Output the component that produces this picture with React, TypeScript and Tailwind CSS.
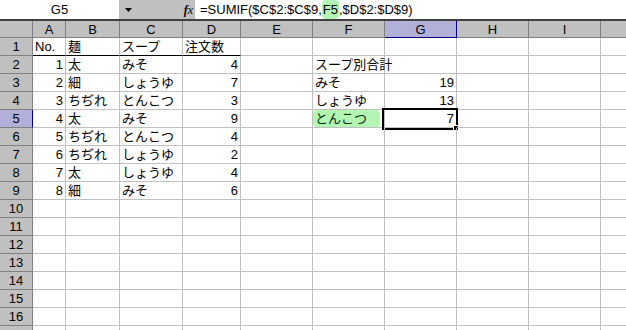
import type React from "react";

const FONT = { fontFamily: '"Liberation Sans", "Noto Sans CJK JP", sans-serif' };

type Cell = { v: string; right?: boolean };

// row -> column letter -> value
const data: Record<number, Record<string, Cell>> = {
  1: { A: { v: "No." }, B: { v: "麺" }, C: { v: "スープ" }, D: { v: "注文数" } },
  2: { A: { v: "1", right: true }, B: { v: "太" }, C: { v: "みそ" }, D: { v: "4", right: true }, F: { v: "スープ別合計" } },
  3: { A: { v: "2", right: true }, B: { v: "細" }, C: { v: "しょうゆ" }, D: { v: "7", right: true }, F: { v: "みそ" }, G: { v: "19", right: true } },
  4: { A: { v: "3", right: true }, B: { v: "ちぢれ" }, C: { v: "とんこつ" }, D: { v: "3", right: true }, F: { v: "しょうゆ" }, G: { v: "13", right: true } },
  5: { A: { v: "4", right: true }, B: { v: "太" }, C: { v: "みそ" }, D: { v: "9", right: true }, F: { v: "とんこつ" }, G: { v: "7", right: true } },
  6: { A: { v: "5", right: true }, B: { v: "ちぢれ" }, C: { v: "とんこつ" }, D: { v: "4", right: true } },
  7: { A: { v: "6", right: true }, B: { v: "ちぢれ" }, C: { v: "しょうゆ" }, D: { v: "2", right: true } },
  8: { A: { v: "7", right: true }, B: { v: "太" }, C: { v: "しょうゆ" }, D: { v: "4", right: true } },
  9: { A: { v: "8", right: true }, B: { v: "細" }, C: { v: "みそ" }, D: { v: "6", right: true } },
};

// J is only partly in view, its label falls outside the window
const letters = ["A", "B", "C", "D", "E", "F", "G", "H", "I", "J"];
const rows = Array.from({ length: 17 }, (_, i) => i + 1);

function HeaderCell({ label, active }: { label: string; active?: boolean }) {
  return (
    <div
      className={`h-[17px] flex items-center justify-center text-[13px] leading-none border-r border-b ${
        active
          ? "bg-[#b0b0d8] border-r-[#000080] border-b-[#000080]"
          : "bg-[#c0c0c0] border-[#808080]"
      }`}
    >
      {label === "J" ? "" : label}
    </div>
  );
}

function RowHeader({ n, active }: { n: number; active?: boolean }) {
  return (
    <div
      className={`h-[18px] flex items-center justify-center text-[13px] leading-none border-r border-b ${
        active
          ? "bg-[#b0b0d8] border-r-[#000080] border-b-[#808080]"
          : "bg-[#c0c0c0] border-[#808080]"
      }`}
    >
      {n < 17 ? n : ""}
    </div>
  );
}

export default function App() {
  return (
    <div className="w-[626px] h-[330px] overflow-hidden bg-white text-black select-none" style={FONT}>
      {/* Formula bar */}
      <div className="flex h-[19px] text-[13px]">
        <div className="w-[119px] flex items-center justify-center bg-white">G5</div>
        <div className="w-[76px] bg-[#c0c0c0] flex items-center justify-between pl-[6px] pr-[2px]">
          <svg width="7" height="4" viewBox="0 0 7 4">
            <path d="M0 0h7L3.5 4z" fill="#000" />
          </svg>
          <span className="italic text-[12px] leading-none" style={{ fontFamily: '"Liberation Serif", serif' }}>
            <b>f</b>x
          </span>
        </div>
        <div className="flex-1 flex items-center pl-[5px] whitespace-nowrap">
          =SUMIF($C$2:$C$9,
          <span className="bg-[#b3f5b3] rounded-[4px] px-[1px]">F5</span>
          ,$D$2:$D$9)
        </div>
      </div>
      <div className="h-[2px] bg-[#404040]" />

      {/* Sheet grid */}
      <div className="grid w-max grid-cols-[33px_33px_54px_63px_58px_72px_72px_72px_72px_72px_72px]">
        <div className="h-[17px] bg-[#c0c0c0] border-r border-b border-[#808080]" />
        {letters.map((l) => (
          <HeaderCell key={l} label={l} active={l === "G"} />
        ))}

        {rows.map((r) => (
          <RowCells key={r} r={r} />
        ))}
      </div>
    </div>
  );
}

function RowCells({ r }: { r: number }) {
  return (
    <>
      <RowHeader n={r} active={r === 5} />
      {letters.map((l) => {
        const cell = data[r]?.[l];
        const underline = r === 1 && ["A", "B", "C", "D"].includes(l);
        const isF5 = r === 5 && l === "F";
        const isG5 = r === 5 && l === "G";
        const cls = `relative h-[18px] border-r border-b border-[#c0c0c0] text-[13px] leading-[17px] whitespace-nowrap ${
          underline ? "border-b-black" : ""
        }`;
        let content: React.ReactNode = null;
        if (cell) {
          content = (
            <div className={`h-full px-[2px] ${cell.right ? "text-right" : "text-left"}`}>{cell.v}</div>
          );
        }
        if (isF5) {
          content = (
            <div className="h-full mr-[4px] bg-[#b3f5b3] rounded-[4px] px-[2px] text-[#0a2a0a]">{cell?.v}</div>
          );
        }
        return (
          <div key={l} className={cls}>
            {content}
            {isG5 && (
              <div className="absolute -left-[3px] -top-[2px] w-[76px] h-[22px] border-[2px] border-black">
                <div className="absolute -right-[3px] -bottom-[3px] w-[6px] h-[6px] bg-black border border-white" />
              </div>
            )}
          </div>
        );
      })}
    </>
  );
}
